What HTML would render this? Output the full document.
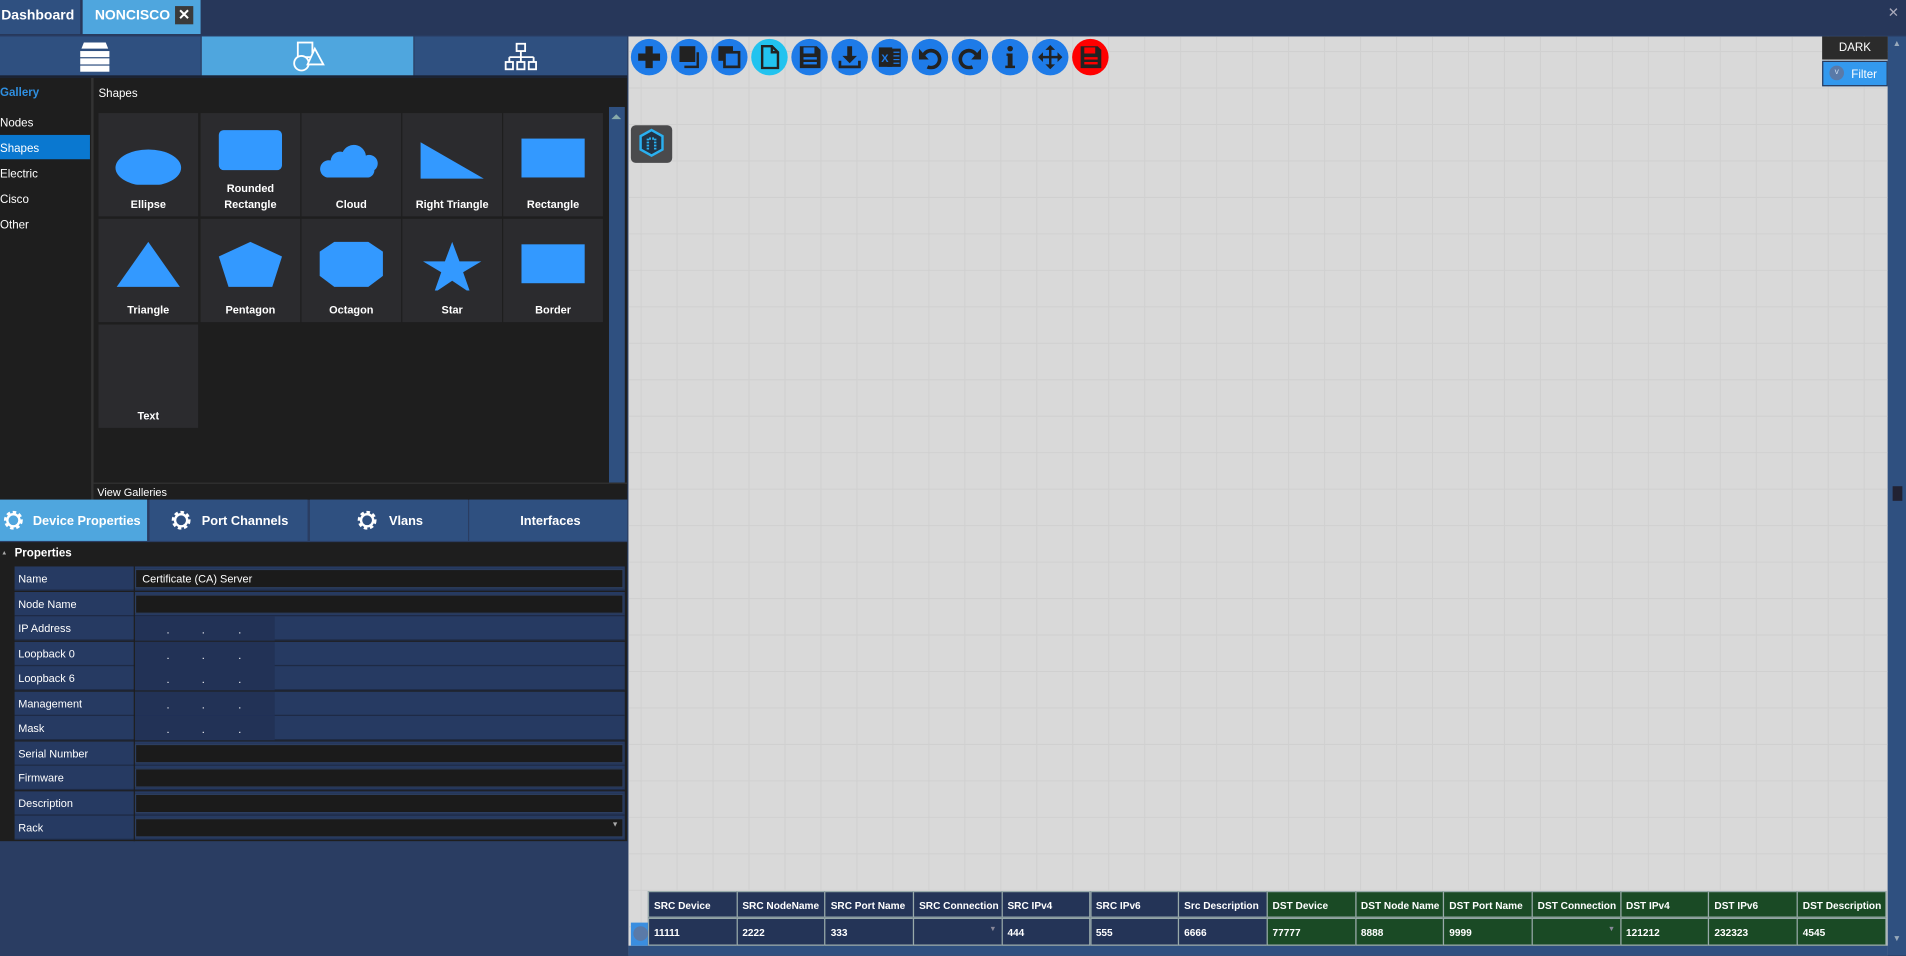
<!DOCTYPE html>
<html><head><meta charset="utf-8">
<style>
*{box-sizing:border-box;margin:0;padding:0}
html,body{width:1906px;height:956px;overflow:hidden;background:#2a3d62}
#s{position:absolute;left:0;top:0;width:1568px;height:786px;transform:scale(1.21556);transform-origin:0 0;font-family:"Liberation Sans",sans-serif;color:#fff;font-size:9.5px}
.a{position:absolute}
.top{left:0;top:0;width:1568px;height:29px;background:#27375a}
.tab{top:0;height:28px;font-size:11.5px;font-weight:bold;line-height:27px}
.blu{background:#4fa6de}
.dk{background:#2f5080}
.tile{position:absolute;width:82px;height:85px;background:#2b2b2e;text-align:center;font-size:9px;font-weight:bold}
.tile span{position:absolute;left:0;right:0;bottom:3px;line-height:13px}
.tile svg{position:absolute;left:11px;top:9px}
.row{position:absolute;left:12px;width:502px;height:20px;background:#263a62;border-bottom:1px solid #1e2a44}
.row .l{position:absolute;left:3px;top:5px;font-size:9px}
.row .v{position:absolute;left:99px;top:2px;width:402px;height:16px;background:#1b1b1b;border:1px solid #2c3e60;font-size:9px;padding:2px 5px}
.row .ip{position:absolute;left:99px;top:0;width:115px;height:20px;background:#223256;font-size:9px}
.cb{position:absolute;top:32px;width:30px;height:30px;border-radius:50%;background:#1e7be8}
.cb svg{position:absolute;left:5px;top:5px}
.th,.td{position:absolute;height:22px;border:1px solid #9aa;font-size:8.3px;font-weight:bold;padding:6px 4px;white-space:nowrap;overflow:hidden}
</style></head><body><div id="s">
<div class="a top"></div>
<div class="a tab dk" style="left:0;width:66px;padding-left:1px">Dashboard</div>
<div class="a tab blu" style="left:68px;width:97px;padding-left:10px">NONCISCO<span style="position:absolute;left:76px;top:5px;width:15px;height:15px;background:#3a3a3a;font-size:12px;line-height:15px;text-align:center">✕</span></div>
<div class="a" style="left:1553px;top:4px;color:#aab;font-size:11px">✕</div>

<div class="a dk" style="left:0;top:30px;width:165px;height:32px"></div>
<div class="a blu" style="left:166px;top:30px;width:174px;height:32px"></div>
<div class="a dk" style="left:341px;top:30px;width:175px;height:32px"></div>
<div class="a" style="left:0;top:62px;width:516px;height:2px;background:#1a2233"></div>
<svg class="a" style="left:65px;top:33px" width="26" height="28"><path d="M4 2h18l2 5H2z" fill="#fff"/><rect x="1" y="9" width="24" height="5" fill="#fff"/><rect x="1" y="15" width="24" height="5" fill="#fff"/><rect x="1" y="21" width="24" height="5" fill="#fff"/></svg>
<svg class="a" style="left:240px;top:34px" width="28" height="26" fill="none" stroke="#fff" stroke-width="1.5"><rect x="5" y="1" width="12" height="12"/><circle cx="8" cy="18" r="6" fill="#4fa6de"/><path d="M19 6l7 13H13z" fill="#4fa6de"/></svg>
<svg class="a" style="left:415px;top:35px" width="28" height="24" fill="none" stroke="#fff" stroke-width="1.5"><rect x="10" y="1" width="7" height="6"/><path d="M13.5 7v5M4 12h20M4 12v4M13.5 12v4M24 12v4"/><rect x="1" y="16" width="6" height="6"/><rect x="10.5" y="16" width="6" height="6"/><rect x="20" y="16" width="6" height="6"/></svg>

<div class="a" style="left:0;top:64px;width:516px;height:347px;background:#1e1e1e"></div>
<div class="a" style="left:75px;top:64px;width:2px;height:347px;background:#333"></div>
<div class="a" style="left:0;top:71px;color:#2f8fe0;font-weight:bold;font-size:9.5px">Gallery</div>
<div class="a" style="left:0;top:96px">Nodes</div>
<div class="a" style="left:0;top:111px;width:74px;height:20px;background:#0a78d0"></div>
<div class="a" style="left:0;top:117px">Shapes</div>
<div class="a" style="left:0;top:138px">Electric</div>
<div class="a" style="left:0;top:159px">Cisco</div>
<div class="a" style="left:0;top:180px">Other</div>
<div class="a" style="left:81px;top:72px">Shapes</div>
<div class="a" style="left:501px;top:88px;width:13px;height:309px;background:#2f5080"></div>
<div class="a" style="left:503px;top:90px;width:0;height:0;border:4px solid transparent;border-bottom:4px solid #8aa"></div>

<div class="tile" style="left:81px;top:93px"><svg width="60" height="50"><ellipse cx="30" cy="36" rx="27" ry="15" fill="#3399ff"/></svg><span>Ellipse</span></div>
<div class="tile" style="left:165px;top:93px"><svg width="60" height="50"><rect x="4" y="5" width="52" height="33" rx="4" fill="#3399ff"/></svg><span>Rounded<br>Rectangle</span></div>
<div class="tile" style="left:248px;top:93px"><svg width="60" height="50"><path d="M10 52a7 7 0 0 1 3-14a8 8 0 0 1 10-7a10 10 0 0 1 19 3a7 7 0 0 1 7 12a6 6 0 0 1-5 6z" fill="#3399ff" transform="translate(0,-8)"/></svg><span>Cloud</span></div>
<div class="tile" style="left:331px;top:93px"><svg width="60" height="50"><path d="M4 15l52 30H4z" fill="#3399ff"/></svg><span>Right Triangle</span></div>
<div class="tile" style="left:414px;top:93px"><svg width="60" height="50"><rect x="4" y="12" width="52" height="32" fill="#3399ff"/></svg><span>Rectangle</span></div>
<div class="tile" style="left:81px;top:180px"><svg width="60" height="50"><path d="M30 10L56 47H4z" fill="#3399ff"/></svg><span>Triangle</span></div>
<div class="tile" style="left:165px;top:180px"><svg width="60" height="50"><path d="M30 10L56 22L48 47H12L4 22z" fill="#3399ff"/></svg><span>Pentagon</span></div>
<div class="tile" style="left:248px;top:180px"><svg width="60" height="50"><path d="M16 10h28l12 8v20l-12 9H16L4 38V18z" fill="#3399ff"/></svg><span>Octagon</span></div>
<div class="tile" style="left:331px;top:180px"><svg width="60" height="50"><path d="M30 10l6 16h18l-15 9l6 17l-15-10l-15 10l6-17l-15-9h18z" fill="#3399ff"/></svg><span>Star</span></div>
<div class="tile" style="left:414px;top:180px"><svg width="60" height="50"><rect x="4" y="12" width="52" height="32" fill="#3399ff"/></svg><span>Border</span></div>
<div class="tile" style="left:81px;top:267px"><span>Text</span></div>

<div class="a" style="left:77px;top:397px;width:439px;height:14px;background:#1e1e1e;border-top:1px solid #333"></div>
<div class="a" style="left:80px;top:400px;font-size:9px">View Galleries</div>

<div class="a blu" style="left:0;top:411px;width:121px;height:34px"></div>
<div class="a dk" style="left:123px;top:411px;width:130px;height:34px"></div>
<div class="a dk" style="left:255px;top:411px;width:130px;height:34px"></div>
<div class="a dk" style="left:386px;top:411px;width:130px;height:34px"></div>
<svg class="a" style="left:2px;top:419px" width="18" height="18" viewBox="0 0 18 18"><circle cx="9" cy="9" r="6" fill="none" stroke="#fff" stroke-width="3.5" stroke-dasharray="2.6 2"/><circle cx="9" cy="9" r="5" fill="none" stroke="#fff" stroke-width="2"/></svg>
<div class="a" style="left:27px;top:423px;font-size:10.5px;font-weight:bold;width:92px;overflow:hidden;white-space:nowrap">Device Properties</div>
<svg class="a" style="left:140px;top:419px" width="18" height="18" viewBox="0 0 18 18"><circle cx="9" cy="9" r="6" fill="none" stroke="#fff" stroke-width="3.5" stroke-dasharray="2.6 2"/><circle cx="9" cy="9" r="5" fill="none" stroke="#fff" stroke-width="2"/></svg>
<div class="a" style="left:166px;top:423px;font-size:10.5px;font-weight:bold">Port Channels</div>
<svg class="a" style="left:293px;top:419px" width="18" height="18" viewBox="0 0 18 18"><circle cx="9" cy="9" r="6" fill="none" stroke="#fff" stroke-width="3.5" stroke-dasharray="2.6 2"/><circle cx="9" cy="9" r="5" fill="none" stroke="#fff" stroke-width="2"/></svg>
<div class="a" style="left:320px;top:423px;font-size:10.5px;font-weight:bold">Vlans</div>
<div class="a" style="left:428px;top:423px;font-size:10.5px;font-weight:bold">Interfaces</div>

<div class="a" style="left:0;top:446px;width:516px;height:246px;background:#1e1e1e"></div>
<div class="a" style="left:1px;top:452px;font-size:5px;color:#aaa">▲</div>
<div class="a" style="left:12px;top:450px;font-size:9.5px;font-weight:bold">Properties</div>
<div class="row" style="top:466px"><span class="l">Name</span><div class="v">Certificate (CA) Server</div></div>
<div class="row" style="top:486.5px"><span class="l">Node Name</span><div class="v"></div></div>
<div class="row" style="top:507px"><span class="l">IP Address</span><div class="ip"><span class="a" style="left:26px;top:6px">.</span><span class="a" style="left:55px;top:6px">.</span><span class="a" style="left:85px;top:6px">.</span></div></div>
<div class="row" style="top:527.5px"><span class="l">Loopback 0</span><div class="ip"><span class="a" style="left:26px;top:6px">.</span><span class="a" style="left:55px;top:6px">.</span><span class="a" style="left:85px;top:6px">.</span></div></div>
<div class="row" style="top:548px"><span class="l">Loopback 6</span><div class="ip"><span class="a" style="left:26px;top:6px">.</span><span class="a" style="left:55px;top:6px">.</span><span class="a" style="left:85px;top:6px">.</span></div></div>
<div class="row" style="top:568.5px"><span class="l">Management</span><div class="ip"><span class="a" style="left:26px;top:6px">.</span><span class="a" style="left:55px;top:6px">.</span><span class="a" style="left:85px;top:6px">.</span></div></div>
<div class="row" style="top:589px"><span class="l">Mask</span><div class="ip"><span class="a" style="left:26px;top:6px">.</span><span class="a" style="left:55px;top:6px">.</span><span class="a" style="left:85px;top:6px">.</span></div></div>
<div class="row" style="top:609.5px"><span class="l">Serial Number</span><div class="v"></div></div>
<div class="row" style="top:630px"><span class="l">Firmware</span><div class="v"></div></div>
<div class="row" style="top:650.5px"><span class="l">Description</span><div class="v"></div></div>
<div class="row" style="top:671px"><span class="l">Rack</span><div class="v"><span class="a" style="right:3px;top:2px;font-size:6px;color:#aaa">▼</span></div></div>
<div class="a" style="left:110px;top:466px;width:1px;height:226px;background:#1e1e1e"></div>

<div class="a" style="left:517px;top:30px;width:1036px;height:756px;background-color:#d9d9d9;background-image:linear-gradient(90deg,#d0d0d0 1px,transparent 1px),linear-gradient(#d0d0d0 1px,transparent 1px);background-size:29.6px 30px;background-position:10px 12px"></div>
<div class="a" style="left:1553px;top:30px;width:15px;height:756px;background:#2f5080"></div>
<div class="a" style="left:1557px;top:33px;font-size:7px;color:#9ab">▲</div>
<div class="a" style="left:1557px;top:769px;font-size:7px;color:#9ab">▼</div>
<div class="a" style="left:1557px;top:400px;width:8px;height:12px;background:#223"></div>
<div class="a" style="left:517px;top:778px;width:1036px;height:8px;background:#2f5080"></div>

<div class="cb" style="left:519px"><svg width="20" height="20"><path d="M7 1h6v6h6v6h-6v6H7v-6H1V7h6z" fill="#222"/></svg></div>
<div class="cb" style="left:552px"><svg width="20" height="20"><rect x="2" y="1" width="13" height="13" fill="#222"/><path d="M17 6v12H6" stroke="#222" stroke-width="2" fill="none"/></svg></div>
<div class="cb" style="left:585px"><svg width="20" height="20"><rect x="1" y="1" width="12" height="12" fill="#222"/><rect x="6" y="6" width="12" height="12" fill="#1e7be8" stroke="#222" stroke-width="2.2"/></svg></div>
<div class="cb" style="left:618px;background:#22c3ef"><svg width="20" height="20"><path d="M4 1h8l5 5v13H4z M12 1v5h5" fill="none" stroke="#222" stroke-width="2"/></svg></div>
<div class="cb" style="left:651px"><svg width="20" height="20"><path d="M2 1h14l3 3v15H2z" fill="#222"/><rect x="5" y="2" width="9" height="5" fill="#1e7be8"/><rect x="5" y="10" width="11" height="2" fill="#1e7be8"/><rect x="5" y="14" width="11" height="2" fill="#1e7be8"/></svg></div>
<div class="cb" style="left:684px"><svg width="20" height="20"><path d="M8 1h4v8h4l-6 6l-6-6h4z" fill="#222"/><path d="M2 13v5h16v-5" fill="none" stroke="#222" stroke-width="2.2"/></svg></div>
<div class="cb" style="left:717px"><svg width="20" height="20"><rect x="8" y="3" width="11" height="15" fill="#222"/><path d="M13 6h5M13 9h5M13 12h5M13 15h5" stroke="#1e7be8"/><rect x="1" y="2" width="11" height="16" fill="#222"/><text x="3" y="14" font-size="9" fill="#1e7be8" font-family="Liberation Sans" font-weight="bold">X</text></svg></div>
<div class="cb" style="left:750px"><svg width="20" height="20"><path d="M5 8a7 7 0 1 1 3 10" fill="none" stroke="#222" stroke-width="3"/><path d="M1 3v9h8z" fill="#222"/></svg></div>
<div class="cb" style="left:783px"><svg width="20" height="20"><path d="M15 8a7 7 0 1 0-3 10" fill="none" stroke="#222" stroke-width="3"/><path d="M19 3v9h-8z" fill="#222"/></svg></div>
<div class="cb" style="left:816px"><svg width="20" height="20"><circle cx="10" cy="3" r="2.3" fill="#222"/><path d="M7 7h5v10h2v2H6v-2h2V9H7z" fill="#222"/></svg></div>
<div class="cb" style="left:849px"><svg width="20" height="20"><path d="M10 0l4 4h-3v5h5V6l4 4l-4 4v-3h-5v5h3l-4 4l-4-4h3v-5H4v3l-4-4l4-4v3h5V4H6z" fill="#222"/></svg></div>
<div class="cb" style="left:882px;background:#f00"><svg width="20" height="20"><path d="M2 1h14l3 3v15H2z" fill="#222"/><rect x="5" y="2" width="9" height="5" fill="#f00"/><rect x="5" y="10" width="11" height="2" fill="#f00"/><rect x="5" y="14" width="11" height="2" fill="#f00"/></svg></div>

<div class="a" style="left:519px;top:103px;width:34px;height:31px;background:#4a4a4c;border-radius:4px"></div>
<svg class="a" style="left:524px;top:105px" width="24" height="26"><path d="M12 2l9 5v11l-9 5l-9-5V7z" fill="#234" stroke="#2ab0f0" stroke-width="2"/><path d="M9 18V9h6v9" fill="none" stroke="#2ab0f0" stroke-width="2" stroke-dasharray="1.5 1"/></svg>

<div class="a" style="left:1499px;top:30px;width:54px;height:19px;background:#2b2b2b;font-size:9.5px;text-align:center;line-height:19px">DARK</div>
<div class="a" style="left:1499px;top:50px;width:54px;height:21px;background:#3399ee;border:1px solid #2a3a5a"></div>
<div class="a" style="left:1505px;top:54px;width:12px;height:12px;border-radius:50%;background:#5a7aa8;font-size:7px;text-align:center;line-height:12px;color:#cde">v</div>
<div class="a" style="left:1523px;top:56px;font-size:9.5px">Filter</div>

<div class="a" style="left:519px;top:759px;width:64px;height:19px;background:#3a8ee0"></div>
<div class="a" style="left:521px;top:762px;width:12px;height:12px;border-radius:50%;background:#5a7aa8"></div>
<div id="tbl"></div>
<script>
var h=["SRC Device","SRC NodeName","SRC Port Name","SRC Connection","SRC IPv4","SRC IPv6","Src Description","DST Device","DST Node Name","DST Port Name","DST Connection","DST IPv4","DST IPv6","DST Description"];
var d=["11111","2222","333","","444","555","6666","77777","8888","9999","","121212","232323","4545"];
var o="";for(var i=0;i<14;i++){var x=533+i*72.7,bg=i<7?"#243457":"#1a4a25";
o+='<div class="th" style="left:'+x+'px;top:733px;width:73.7px;background:'+bg+'">'+h[i]+'</div>';
o+='<div class="td" style="left:'+x+'px;top:755px;width:73.7px;height:23px;background:'+bg+'">'+d[i]+(d[i]==""?'<span style="position:absolute;right:4px;top:6px;font-size:6px;color:#889">▼</span>':'')+'</div>';}
document.getElementById("tbl").innerHTML=o;
</script>
</div></body></html>
